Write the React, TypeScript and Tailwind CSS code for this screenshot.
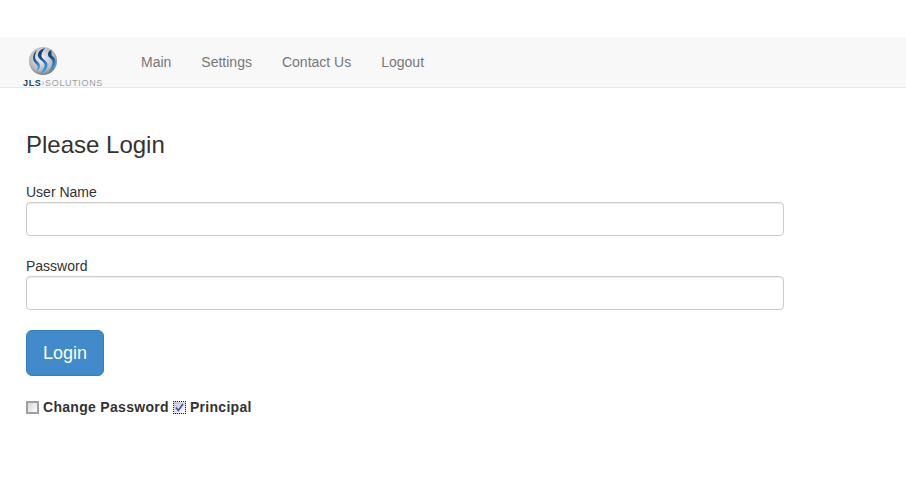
import React from 'react';

const navLinks = ['Main', 'Settings', 'Contact Us', 'Logout'];

function LogoMark() {
  return (
    <svg width="30" height="30" viewBox="0 0 30 30" className="block">
      <defs>
        <radialGradient id="ball" cx="45%" cy="40%" r="70%">
          <stop offset="0%" stopColor="#f4f5f6" />
          <stop offset="65%" stopColor="#b4b6b9" />
          <stop offset="100%" stopColor="#505357" />
        </radialGradient>
        <linearGradient id="swoosh" x1="0" y1="0" x2="0.4" y2="1">
          <stop offset="0%" stopColor="#14365f" />
          <stop offset="50%" stopColor="#17528f" />
          <stop offset="100%" stopColor="#3a9de6" />
        </linearGradient>
      </defs>
      <circle cx="15" cy="15" r="14" fill="url(#ball)" />
      <path
        d="M17 2C12 3.500 9.500 6.500 10 10c.6 3.500 5.500 5 6.500 8 .7 2.200-1 5-4 9.800 4.500-1.500 7-5 7-9 0-4-5.500-5.500-6-8.500C13 8 14.500 5 17 2z"
        fill="url(#swoosh)"
      />
      <path
        d="M23.500 4c-2.500.8-3.500 2.500-3.500 4.500 0 3 4 4 4.500 7 .4 2.500-1 6-4 10.500 4.500-2 7-6 7-10.500 0-4-3.500-5-4-7-.2-1 0-3 0-4.500z"
        fill="url(#swoosh)"
      />
      <path
        d="M9 4C6 6.500 4.800 10 5.200 13c.5 3.500 4 5 4.500 7.500.2 1.300-.2 3-1 4.500 2-1 3.300-3 3.300-5.500 0-3-4.500-4.500-5-7.500C6.700 10 7.500 7 9 4z"
        fill="url(#swoosh)"
      />
    </svg>
  );
}

function Logo() {
  return (
    <div className="flex w-[78px] flex-col pt-[9px]">
      <div className="ml-[5px]">
        <LogoMark />
      </div>
      <div className="mt-[3px] whitespace-nowrap text-[9px] leading-[9px] tracking-[0.65px]">
        <span className="font-bold text-[#1d4468]">JLS</span>
        <span className="text-[#9a9ea1]">›SOLUTIONS</span>
      </div>
    </div>
  );
}

function Field({ label, className }: { label: string; className: string }) {
  return (
    <div className={className}>
      <label className="block text-sm leading-[20px] text-[#333]">{label}</label>
      <input
        type="text"
        className="block h-[34px] w-[758px] rounded-[4px] border border-[#ccc] bg-white shadow-[inset_0_1px_1px_rgba(0,0,0,0.075)]"
      />
    </div>
  );
}

function Checkbox({ checked }: { checked?: boolean }) {
  return (
    <span
      className={
        checked
          ? 'relative inline-block size-[13px] border border-dotted border-[#222] bg-gradient-to-br from-[#bfc2c9] to-white'
          : 'inline-block size-[13px] border-2 border-[#a0a0a0] bg-gradient-to-br from-[#d4d6da] to-white'
      }
    >
      {checked && (
        <svg viewBox="0 0 11 11" className="absolute inset-0 size-[11px]">
          <path d="M2 5.500l2.300 3L9 2" fill="none" stroke="#3a4fa8" strokeWidth="1.600" />
        </svg>
      )}
    </span>
  );
}

export default function App() {
  return (
    <div className="min-h-[481px] bg-white pt-[37px] font-['Liberation_Sans',Arial,sans-serif] text-[#333]">
      <nav className="flex h-[51px] items-start border-b border-[#e7e7e7] bg-[#f8f8f8] pl-[23px]">
        <Logo />
        <ul className="ml-[25px] flex">
          {navLinks.map((link) => (
            <li key={link} className="px-[15px] pt-[15px] text-sm leading-[20px] text-[#777]">
              {link}
            </li>
          ))}
        </ul>
      </nav>

      <main className="pl-[26px]">
        <h3 className="mt-[40px] mb-[21px] text-2xl leading-[33px] font-normal">Please Login</h3>
        <Field label="User Name" className="mb-[20px]" />
        <Field label="Password" className="mb-[20px]" />
        <button className="h-[46px] w-[78px] rounded-[6px] border border-[#357ebd] bg-[#428bca] text-lg text-white">
          Login
        </button>
        <div className="mt-[21px] flex items-center text-sm leading-[20px] font-bold tracking-[0.3px]">
          <Checkbox />
          <span className="ml-[4px]">Change Password</span>
          <span className="ml-[4px] inline-flex">
            <Checkbox checked />
          </span>
          <span className="ml-[4px]">Principal</span>
        </div>
      </main>
    </div>
  );
}
